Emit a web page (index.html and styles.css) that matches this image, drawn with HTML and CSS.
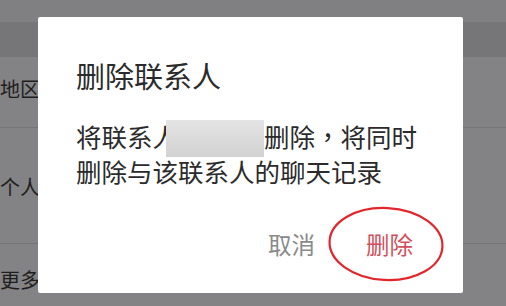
FILE: index.html
```html
<!DOCTYPE html>
<html lang="zh-CN">
<head>
<meta charset="utf-8">
<title>删除联系人</title>
<link rel="stylesheet" href="styles.css">
</head>
<body>
<div class="page">
  <div class="top"><span class="top-text">设置备注和标签</span></div>
  <div class="band"></div>
  <div class="row row-a"><span>地区</span></div>
  <div class="row row-b"><span>个人签名</span></div>
  <div class="row row-c"><span>更多信息</span></div>
</div>
<div class="dialog">
  <div class="title">删除联系人</div>
  <div class="body">
    <div class="line">将联系人<span class="name"></span><span class="blur"></span>删除<span class="comma" lang="zh-TW">，</span>将同时</div>
    <div class="line">删除与该联系人的聊天记录</div>
  </div>
  <div class="actions">
    <span class="btn cancel">取消</span>
    <span class="btn del">删除
      <svg class="circle" width="120" height="80" viewBox="0 0 120 80" aria-hidden="true">
        <ellipse cx="60" cy="40" rx="56.5" ry="36" fill="none" stroke="#e2262c" stroke-width="2.2" transform="rotate(3 60 40)"/>
      </svg>
    </span>
  </div>
</div>
</body>
</html>
```

FILE: styles.css
```css
html, body {
  margin: 0;
  padding: 0;
}
body {
  width: 506px;
  height: 306px;
  overflow: hidden;
  position: relative;
  background: #838284;
  font-family: "Noto Sans CJK SC", "Noto Sans", sans-serif;
}
.page {
  display: flex;
  flex-direction: column;
}
.top {
  height: 22px;
  background: #807f81;
  overflow: hidden;
  padding-left: 8px;
}
.top-text {
  display: block;
  font-size: 20px;
  line-height: 22px;
  margin-top: -21px;
  color: #3a3a3a;
}
.band {
  height: 35px;
  background: #767577;
}
.row {
  display: flex;
  align-items: center;
  font-size: 20px;
  color: #1e1e1e;
  border-bottom: 1px solid #767577;
}
.row-a { height: 71px; padding-bottom: 8px; box-sizing: border-box; }
.row-b { height: 116px; padding-top: 2px; box-sizing: border-box; }
.row-c { height: 62px; border-bottom: none; padding-top: 8px; box-sizing: border-box; }

.dialog {
  position: absolute;
  left: 38px;
  top: 17px;
  width: 425px;
  height: 276px;
  background: #ffffff;
  border-radius: 2px;
  box-sizing: border-box;
  padding: 40px 50px 0 38px;
  display: flex;
  flex-direction: column;
}
.title {
  font-size: 29px;
  line-height: 36px;
  color: #2b2b2b;
}
.body {
  margin-top: 27px;
  font-size: 25.5px;
  line-height: 28px;
  color: #2b2b2b;
}
.line {
  white-space: nowrap;
}
.comma {
  font-family: "Noto Sans CJK TC", "Noto Sans CJK SC", sans-serif;
}
.name {
  display: inline-block;
  width: 86px;
}
.blur {
  display: inline-block;
  width: 98px;
  height: 37px;
  margin-left: -98px;
  vertical-align: -10px;
  background: linear-gradient(180deg, #e4e4e4 0%, #d2d2d2 100%);
}
.actions {
  margin-top: 39px;
  display: flex;
  justify-content: flex-end;
  gap: 51px;
  font-size: 23.5px;
  line-height: 40px;
}
.btn {
  position: relative;
}
.cancel {
  color: #8a8a8a;
}
.del {
  color: #cf4f5c;
}
.circle {
  position: absolute;
  left: -40px;
  top: -20px;
}
```
